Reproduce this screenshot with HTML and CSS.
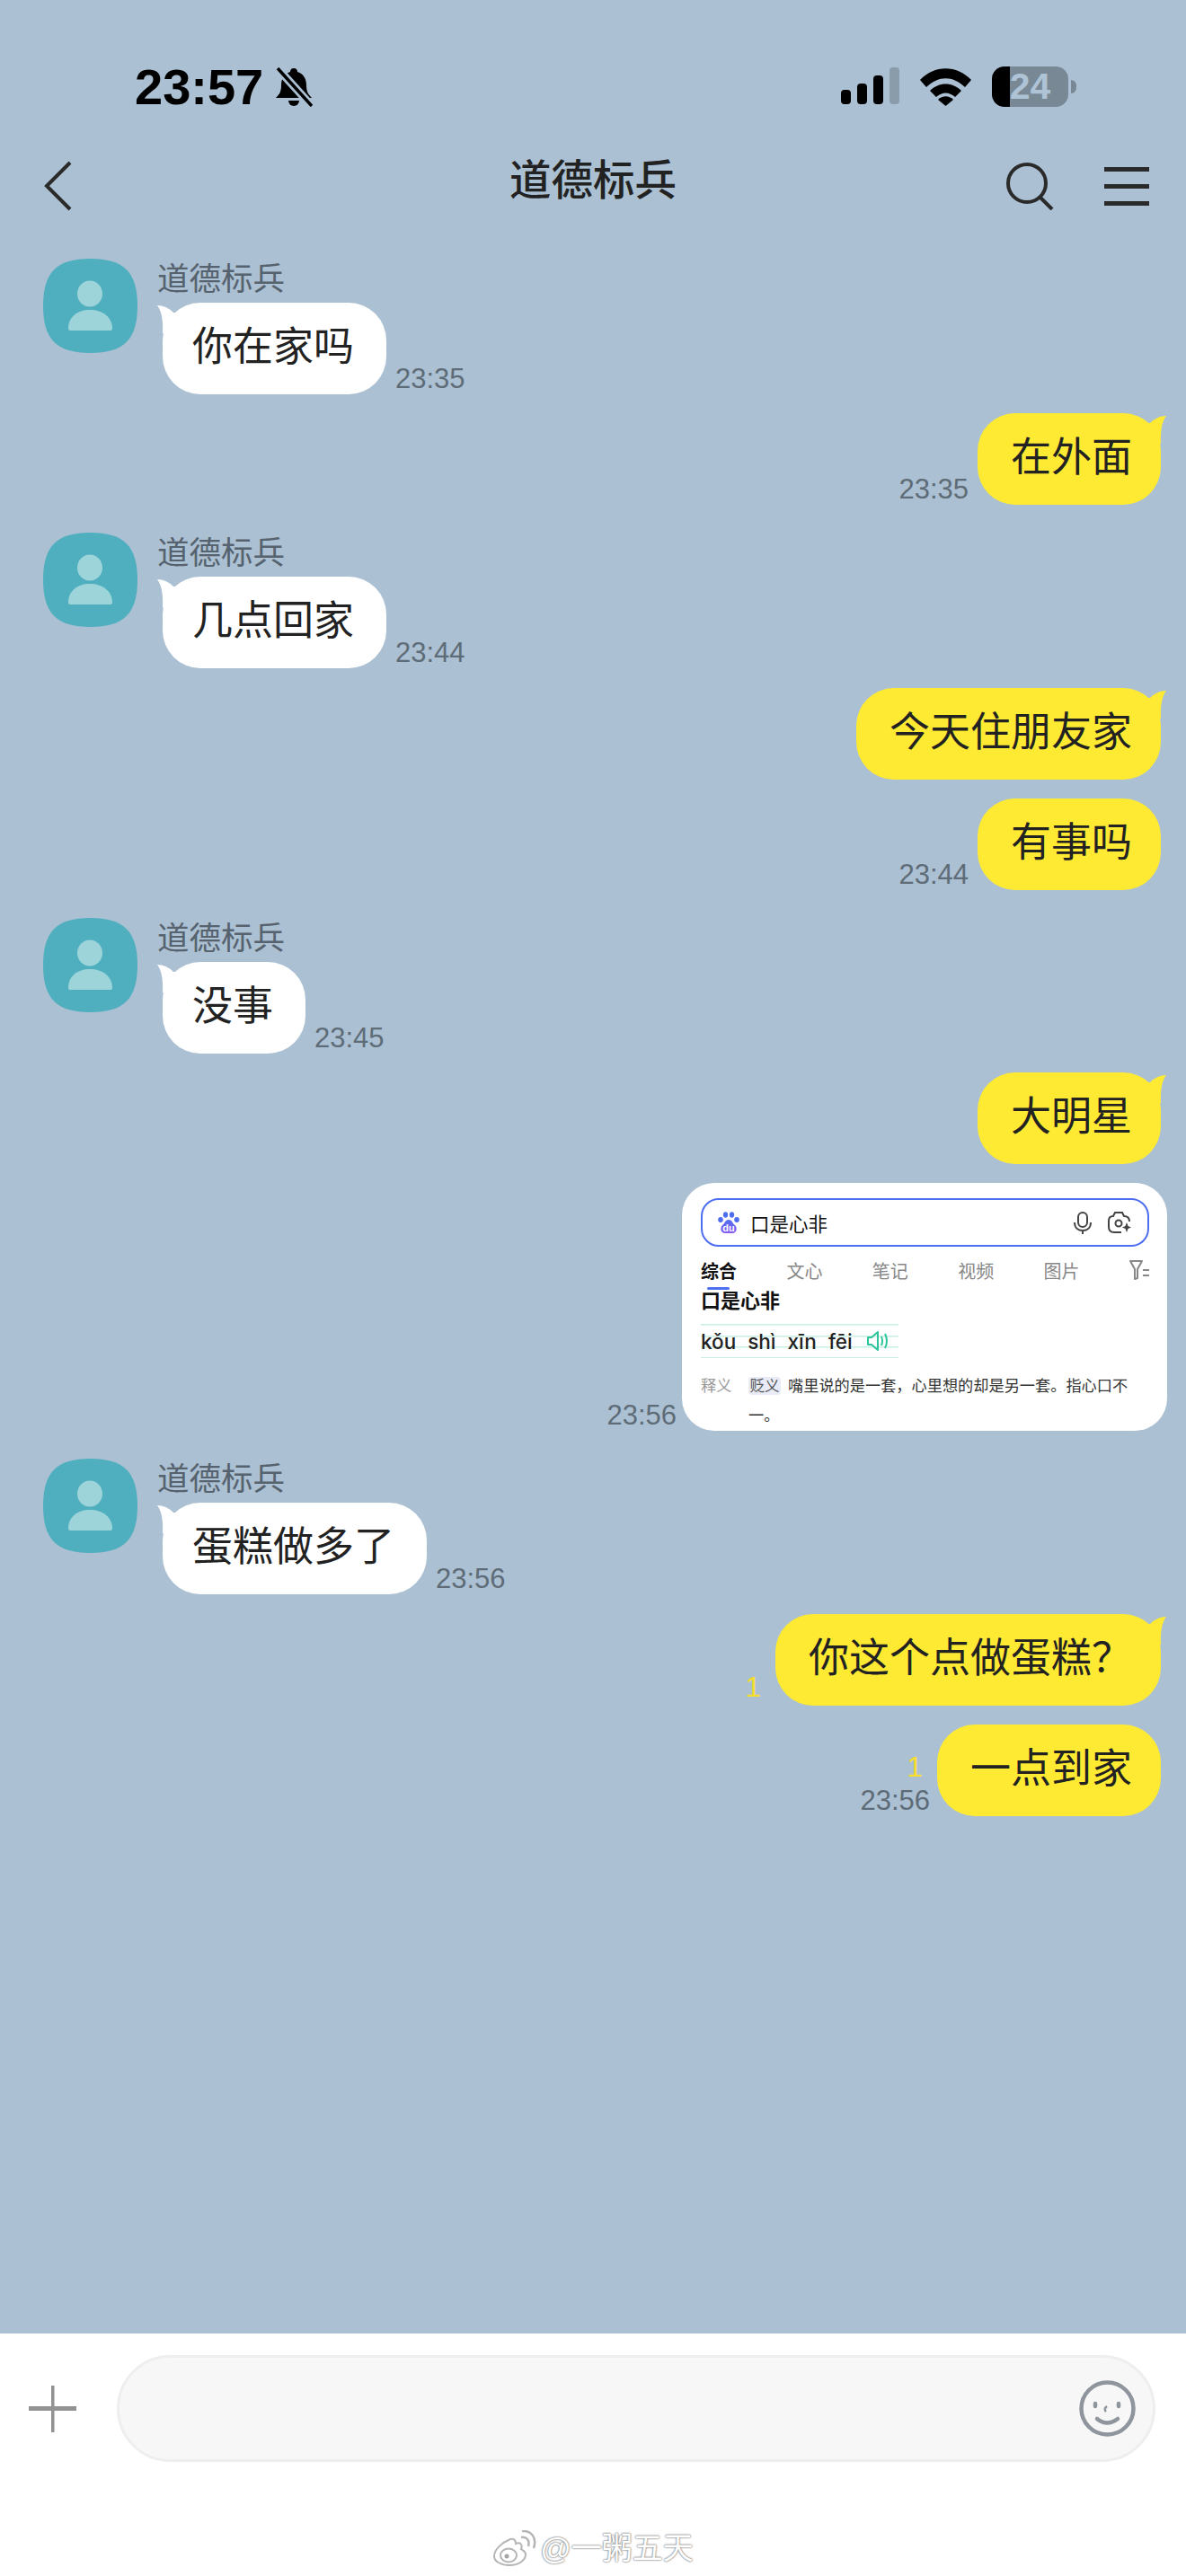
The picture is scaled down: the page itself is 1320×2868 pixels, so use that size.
FILE: index.html
```html
<!DOCTYPE html>
<html lang="zh">
<head>
<meta charset="utf-8">
<title>道德标兵</title>
<link rel="stylesheet" href="styles.css">
</head>
<body>
<div class="page">
  <div class="statusBar">
    <div class="statusLeft">
      <span class="clock">23:57</span>
      <svg class="bell" width="42" height="44" viewBox="0 0 42 44">
        <path d="M21 1C24 1 25 3 25 5C32 7 35 13 35 20C35 27 37 30 41 34H1C5 30 7 27 7 20C7 13 10 7 17 5C17 3 18 1 21 1Z"/>
        <path d="M15 37a6 6 0 0 0 12 0Z"/>
        <path d="M3 1L41 43" stroke="#abc0d2" stroke-width="9"/>
        <path d="M3 1L41 43" stroke="#000" stroke-width="3.5"/>
      </svg>
    </div>
    <div class="statusRight">
      <div class="signal">
        <span class="bar bar1"></span><span class="bar bar2"></span><span class="bar bar3"></span><span class="bar bar4"></span>
      </div>
      <svg class="wifi" width="57" height="42" viewBox="0 0 57 42">
        <path d="M0 13C16 -4 41 -4 57 13L50 21C36 8 21 8 7 21Z"/>
        <path d="M11 25C21 15 36 15 46 25L39 32C32 26 25 26 18 32Z"/>
        <path d="M20 35C25 30 32 30 37 35L28.5 42Z"/>
      </svg>
      <div class="battery"><span>24</span></div>
      <span class="batteryCap"></span>
    </div>
  </div>

  <div class="navBar">
    <svg class="back" width="32" height="58" viewBox="0 0 32 58">
      <path d="M30 3L4 29L30 55" fill="none" stroke="#2a2a2a" stroke-width="4"/>
    </svg>
    <div class="navTitle">道德标兵</div>
    <div class="navRight">
      <svg class="search" width="54" height="54" viewBox="0 0 54 54">
        <circle cx="24" cy="24" r="21" fill="none" stroke="#2a2a2a" stroke-width="4"/>
        <path d="M38 39L52 53" stroke="#2a2a2a" stroke-width="4"/>
      </svg>
      <div class="menu"><span></span><span></span><span></span></div>
    </div>
  </div>

  <div class="chat">
    <div class="recv">
      <svg class="avatar" width="105" height="105" viewBox="0 0 105 105">
        <path d="M52.5 0C90 0 105 15 105 52.5C105 90 90 105 52.5 105C15 105 0 90 0 52.5C0 15 15 0 52.5 0Z" fill="#4fafbf"/>
        <ellipse cx="52" cy="39" rx="14" ry="14.5" fill="#9dd4da"/>
        <path d="M28 78C28 65 38 57 52 57C66 57 77 65 77 78Q77 80 74 80H31Q28 80 28 78Z" fill="#9dd4da"/>
      </svg>
      <div class="recvBody">
        <div class="name">道德标兵</div>
        <div class="line">
          <div class="bubble white"><svg class="tail" width="30" height="34" viewBox="0 0 30 34"><path d="M2 3Q12 3 20 11L30 11V34H8Q9 12 2 3Z"/></svg>你在家吗</div>
          <span class="time">23:35</span>
        </div>
      </div>
    </div>

    <div class="sent">
      <span class="time">23:35</span>
      <div class="bubble yellow"><svg class="tail" width="30" height="34" viewBox="0 0 30 34"><path d="M2 3Q12 3 20 11L30 11V34H8Q9 12 2 3Z"/></svg>在外面</div>
    </div>

    <div class="recv">
      <svg class="avatar" width="105" height="105" viewBox="0 0 105 105">
        <path d="M52.5 0C90 0 105 15 105 52.5C105 90 90 105 52.5 105C15 105 0 90 0 52.5C0 15 15 0 52.5 0Z" fill="#4fafbf"/>
        <ellipse cx="52" cy="39" rx="14" ry="14.5" fill="#9dd4da"/>
        <path d="M28 78C28 65 38 57 52 57C66 57 77 65 77 78Q77 80 74 80H31Q28 80 28 78Z" fill="#9dd4da"/>
      </svg>
      <div class="recvBody">
        <div class="name">道德标兵</div>
        <div class="line">
          <div class="bubble white"><svg class="tail" width="30" height="34" viewBox="0 0 30 34"><path d="M2 3Q12 3 20 11L30 11V34H8Q9 12 2 3Z"/></svg>几点回家</div>
          <span class="time">23:44</span>
        </div>
      </div>
    </div>

    <div class="sent">
      <div class="bubble yellow"><svg class="tail" width="30" height="34" viewBox="0 0 30 34"><path d="M2 3Q12 3 20 11L30 11V34H8Q9 12 2 3Z"/></svg>今天住朋友家</div>
    </div>

    <div class="sent">
      <span class="time">23:44</span>
      <div class="bubble yellow">有事吗</div>
    </div>

    <div class="recv">
      <svg class="avatar" width="105" height="105" viewBox="0 0 105 105">
        <path d="M52.5 0C90 0 105 15 105 52.5C105 90 90 105 52.5 105C15 105 0 90 0 52.5C0 15 15 0 52.5 0Z" fill="#4fafbf"/>
        <ellipse cx="52" cy="39" rx="14" ry="14.5" fill="#9dd4da"/>
        <path d="M28 78C28 65 38 57 52 57C66 57 77 65 77 78Q77 80 74 80H31Q28 80 28 78Z" fill="#9dd4da"/>
      </svg>
      <div class="recvBody">
        <div class="name">道德标兵</div>
        <div class="line">
          <div class="bubble white"><svg class="tail" width="30" height="34" viewBox="0 0 30 34"><path d="M2 3Q12 3 20 11L30 11V34H8Q9 12 2 3Z"/></svg>没事</div>
          <span class="time">23:45</span>
        </div>
      </div>
    </div>

    <div class="sent">
      <div class="bubble yellow"><svg class="tail" width="30" height="34" viewBox="0 0 30 34"><path d="M2 3Q12 3 20 11L30 11V34H8Q9 12 2 3Z"/></svg>大明星</div>
    </div>

    <div class="sent sentCard">
      <span class="time">23:56</span>
      <div class="card">
        <div class="searchBox">
          <svg class="paw" width="24" height="25" viewBox="0 0 24 25">
            <defs><linearGradient id="pawBody" x1="0" y1="0" x2="0" y2="1"><stop offset="0" stop-color="#4e6ef2"/><stop offset="1" stop-color="#8a5df0"/></linearGradient></defs>
            <ellipse cx="3" cy="9" rx="2.8" ry="3" fill="#4e6ef2"/>
            <ellipse cx="8.5" cy="3.5" rx="2.6" ry="3.2" fill="#4e6ef2"/>
            <ellipse cx="15.5" cy="3.5" rx="2.6" ry="3.2" fill="#4e6ef2"/>
            <ellipse cx="21" cy="9" rx="2.8" ry="3" fill="#4e6ef2"/>
            <path d="M12 9C16 9 16 13 19 15C22 18 21 24 16 24H8C3 24 2 18 5 15C8 13 8 9 12 9Z" fill="url(#pawBody)"/>
            <text x="12" y="22" text-anchor="middle" class="pawText">du</text>
          </svg>
          <span class="searchText">口是心非</span>
          <svg class="mic" width="20" height="25" viewBox="0 0 20 25" fill="none" stroke="#444" stroke-width="2">
            <rect x="5" y="1" width="10" height="16" rx="5"/>
            <path d="M1 12C1 18 5 21 10 21C15 21 19 18 19 12M10 21V25"/>
          </svg>
          <svg class="cam" width="26" height="24" viewBox="0 0 26 24" fill="none" stroke="#444" stroke-width="2">
            <path d="M15 23H7C3 23 1 21 1 17V10C1 6 3 5 6 5L8 1H16L18 5C22 5 24 7 24 11"/>
            <circle cx="12" cy="13" r="3.5"/>
            <path d="M21 12L22.5 16L26 17.5L22.5 19L21 23L19.500 19L16 17.5L19.500 16Z" fill="#444" stroke="none"/>
          </svg>
        </div>
        <div class="tabs">
          <span class="tab tabOn">综合</span>
          <span class="tab">文心</span>
          <span class="tab">笔记</span>
          <span class="tab">视频</span>
          <span class="tab">图片</span>
          <svg class="filter" width="22" height="24" viewBox="0 0 22 24" fill="none" stroke="#888" stroke-width="2">
            <path d="M1 2H14L9 11V21L6 22V11Z" stroke-linejoin="round"/>
            <path d="M15 12H22M15 18H22"/>
          </svg>
        </div>
        <div class="cardHeading">口是心非</div>
        <div class="pinyin">
          <span>kǒu</span><span>shì</span><span>xīn</span><span>fēi</span>
          <svg class="speaker" width="24" height="22" viewBox="0 0 24 22" fill="none" stroke="#2cc49a" stroke-width="2">
            <path d="M1 7H5L12 1V21L5 15H1Z" stroke-linejoin="round"/>
            <path d="M16 6Q18 11 16 16M20 3Q24 11 20 19"/>
          </svg>
        </div>
        <div class="defRow">
          <span class="defLabel">释义</span>
          <div class="defText">
            <div class="defLine"><span class="defTag">贬义</span><span>嘴里说的是一套，心里想的却是另一套。指心口不</span></div>
            <div class="defLine">一。</div>
          </div>
        </div>
      </div>
    </div>

    <div class="recv">
      <svg class="avatar" width="105" height="105" viewBox="0 0 105 105">
        <path d="M52.5 0C90 0 105 15 105 52.5C105 90 90 105 52.5 105C15 105 0 90 0 52.5C0 15 15 0 52.5 0Z" fill="#4fafbf"/>
        <ellipse cx="52" cy="39" rx="14" ry="14.5" fill="#9dd4da"/>
        <path d="M28 78C28 65 38 57 52 57C66 57 77 65 77 78Q77 80 74 80H31Q28 80 28 78Z" fill="#9dd4da"/>
      </svg>
      <div class="recvBody">
        <div class="name">道德标兵</div>
        <div class="line">
          <div class="bubble white"><svg class="tail" width="30" height="34" viewBox="0 0 30 34"><path d="M2 3Q12 3 20 11L30 11V34H8Q9 12 2 3Z"/></svg>蛋糕做多了</div>
          <span class="time">23:56</span>
        </div>
      </div>
    </div>

    <div class="sent">
      <div class="meta"><span class="unread">1</span></div>
      <div class="bubble yellow"><svg class="tail" width="30" height="34" viewBox="0 0 30 34"><path d="M2 3Q12 3 20 11L30 11V34H8Q9 12 2 3Z"/></svg>你这个点做蛋糕？</div>
    </div>

    <div class="sent">
      <div class="meta"><span class="unread">1</span><span class="time">23:56</span></div>
      <div class="bubble yellow">一点到家</div>
    </div>
  </div>

  <div class="composer">
    <div class="inputRow">
      <div class="plus"></div>
      <div class="field">
        <svg class="smile" width="63" height="63" viewBox="0 0 63 63" fill="none" stroke="#8f959c" stroke-width="4.5">
          <circle cx="31.500" cy="31.500" r="29"/>
          <path d="M18 26V29M44 26V29" stroke-linecap="round"/>
          <path d="M31 29Q27 32 30 35" stroke-width="2.5"/>
          <path d="M20 43Q31 52 43 43" stroke-linecap="round"/>
        </svg>
      </div>
    </div>
    <div class="watermark">
      <svg class="weibo" width="50" height="40" viewBox="0 0 50 40">
        <path d="M20 10C10 14 2 22 2 29C2 35 10 39 19 39C30 39 37 33 37 27C37 23 33 22 32 21C34 16 31 13 26 15C26 11 24 9 20 10Z" fill="#fff" stroke="#b5b5b5" stroke-width="2"/>
        <ellipse cx="18" cy="28" rx="9" ry="7.500" fill="#fff" stroke="#b5b5b5" stroke-width="2"/>
        <circle cx="16" cy="29" r="2.500" fill="#a5a5a5"/>
        <path d="M32 8C38 7 42 11 40 18M33 1C43 0 50 8 46 20" fill="none" stroke="#b5b5b5" stroke-width="2.500"/>
      </svg>
      <span class="markText">@一粥五天</span>
    </div>
  </div>
</div>
</body>
</html>
```

FILE: styles.css
```css
* {
 box-sizing: border-box;
}
body {
 margin: 0;
 background-color: #abc0d2;
 font-family: "Liberation Sans", "Noto Sans CJK SC", sans-serif;
}
.page {
 width: 1320px;
 height: 2868px;
 display: flex;
 flex-direction: column;
 overflow: hidden;
}

/* status bar */
.statusBar {
 display: flex;
 justify-content: space-between;
 align-items: center;
 height: 45px;
 margin-top: 74px;
 padding: 0 122px 0 150px;
}
.statusLeft {
 display: flex;
 align-items: center;
 gap: 13px;
}
.clock {
 font-size: 56px;
 font-weight: bold;
 line-height: 45px;
 color: #000;
}
.bell {
 display: block;
}
.statusRight {
 display: flex;
 align-items: center;
}
.signal {
 display: flex;
 align-items: flex-end;
 gap: 7px;
 height: 41px;
 margin-top: -2px;
 margin-right: 23px;
}
.bar {
 width: 11px;
 border-radius: 4px;
 background-color: #000;
}
.bar1 { height: 16px; }
.bar2 { height: 23px; }
.bar3 { height: 32px; }
.bar4 { height: 41px; background-color: #8a9baa; }
.wifi {
 display: block;
 margin-right: 23px;
}
.battery {
 display: flex;
 justify-content: center;
 align-items: center;
 width: 85px;
 height: 45px;
 border-radius: 14px;
 background: linear-gradient(to right, #000 20px, #788894 20px);
 font-size: 41px;
 font-weight: bold;
 color: #afc3d6;
}
.batteryCap {
 width: 6px;
 height: 15px;
 margin-left: 3px;
 border-radius: 0 8px 8px 0;
 background-color: #788894;
}

/* nav */
.navBar {
 display: grid;
 grid-template-columns: 1fr auto 1fr;
 align-items: center;
 height: 58px;
 margin-top: 53px;
 padding: 0 41px 0 48px;
}
.back {
 display: block;
}
.navTitle {
 margin-right: 7px;
 padding-bottom: 12px;
 font-size: 46.5px;
 font-weight: 500;
 line-height: 58px;
 color: #222;
}
.navRight {
 display: flex;
 justify-content: flex-end;
 align-items: center;
 gap: 56px;
}
.search {
 display: block;
}
.menu {
 display: flex;
 flex-direction: column;
 gap: 14px;
 width: 50px;
}
.menu span {
 height: 5px;
 background-color: #2a2a2a;
}

/* messages */
.chat {
 flex: 1;
 display: flex;
 flex-direction: column;
 gap: 21.3px;
 padding: 58px 28px 0 48px;
}
.recv {
 display: flex;
 gap: 22px;
 margin-top: 9.7px;
}
.chat .recv:first-child {
 margin-top: 0;
}
.avatar {
 display: block;
 flex: none;
}
.name {
 height: 49px;
 font-size: 35.5px;
 line-height: 47px;
 color: #56636f;
}
.line {
 display: flex;
 align-items: flex-end;
 gap: 10px;
 margin-left: 6px;
}
.bubble {
 position: relative;
 height: 102px;
 border-radius: 42px;
 font-size: 45px;
 line-height: 100px;
 color: #222;
 white-space: nowrap;
}
.white {
 padding: 0 36px 0 33px;
 background-color: #fff;
}
.white .tail {
 fill: #fff;
}
.yellow {
 padding: 0 32px 0 37px;
 background-color: #ffea33;
}
.yellow .tail {
 fill: #ffea33;
 left: auto;
 right: -8px;
 transform: scaleX(-1);
}
.tail {
 position: absolute;
 left: -8px;
 top: 0;
}
.time {
 font-size: 31px;
 line-height: 30px;
 padding-bottom: 2px;
 color: #5e6c78;
 white-space: nowrap;
}
.sent {
 display: flex;
 justify-content: flex-end;
 align-items: flex-end;
 gap: 10px;
}
.meta {
 display: flex;
 flex-direction: column;
 align-items: flex-end;
}
.meta .time {
 margin-top: 2px;
 margin-right: -2px;
}
.unread {
 margin-right: 6px;
 margin-bottom: 6px;
 font-size: 32px;
 line-height: 30px;
 color: #f7de2e;
}

/* screenshot card */
.sentCard {
 gap: 6px;
 margin-right: -7px;
}
.card {
 width: 540px;
 height: 276px;
 padding: 17px 20px 0 21px;
 border-radius: 36px;
 background-color: #fff;
}
.searchBox {
 display: flex;
 align-items: center;
 height: 54px;
 padding: 0 18px 0 17px;
 border: 2.5px solid #4e6ef2;
 border-radius: 20px;
}
.paw {
 display: block;
 margin-right: 12px;
}
.pawText {
 font-size: 11px;
 font-weight: bold;
 fill: #fff;
}
.searchText {
 flex: 1;
 font-size: 21.5px;
 color: #111;
}
.mic {
 display: block;
 margin-right: 18px;
}
.cam {
 display: block;
}
.tabs {
 display: flex;
 justify-content: space-between;
 align-items: center;
 height: 30px;
 margin-top: 11px;
 font-size: 20px;
 color: #888;
}
.tab {
 position: relative;
}
.tabOn {
 font-weight: bold;
 color: #111;
}
.tabOn::after {
 content: "";
 position: absolute;
 left: 7px;
 right: 8px;
 bottom: -7px;
 height: 3px;
 border-radius: 2px;
 background-color: #4e6ef2;
}
.filter {
 display: block;
}
.cardHeading {
 height: 30px;
 margin-top: 5px;
 font-size: 22px;
 font-weight: bold;
 line-height: 30px;
 color: #111;
}
.pinyin {
 display: flex;
 align-items: center;
 gap: 13px;
 width: 220px;
 height: 38px;
 margin-top: 10px;
 background:
  linear-gradient(#c8efe4, #c8efe4) 0 0 / 100% 1.5px no-repeat,
  linear-gradient(#c8efe4, #c8efe4) 0 13px / 100% 1.5px no-repeat,
  linear-gradient(#c8efe4, #c8efe4) 0 25px / 100% 1.5px no-repeat,
  linear-gradient(#c8efe4, #c8efe4) 0 37px / 100% 1.5px no-repeat;
 font-family: Inter, "Liberation Sans", sans-serif;
 font-size: 22.5px;
 font-weight: 500;
 color: #222;
}
.speaker {
 display: block;
 margin-left: 3px;
}
.defRow {
 display: flex;
 margin-top: 15px;
 font-size: 17.2px;
 line-height: 33px;
}
.defLabel {
 flex: none;
 width: 53px;
 color: #999;
}
.defText {
 color: #333;
}
.defLine {
 height: 33px;
 white-space: nowrap;
}
.defTag {
 margin-right: 8px;
 padding: 1px 1.5px;
 border-radius: 4px;
 background-color: #e9ecf7;
 font-size: 16.500px;
 color: #555;
}

/* bottom input */
.composer {
 height: 270px;
 background-color: #fff;
}
.inputRow {
 display: flex;
 align-items: center;
 padding: 24px 34px 0 32px;
}
.plus {
 flex: none;
 width: 53px;
 height: 52px;
 margin-right: 45px;
 background:
  linear-gradient(#929292, #929292) center / 100% 5px no-repeat,
  linear-gradient(#929292, #929292) center / 3.5px 100% no-repeat;
}
.field {
 flex: 1;
 display: flex;
 justify-content: flex-end;
 align-items: center;
 height: 119px;
 padding-right: 19px;
 border: 3px solid #eeeeee;
 border-radius: 60px;
 background-color: #f7f7f7;
}
.smile {
 display: block;
}
.watermark {
 display: flex;
 justify-content: center;
 align-items: center;
 gap: 3px;
 margin-top: 76px;
}
.weibo {
 display: block;
}
.markText {
 font-size: 34px;
 line-height: 38px;
 color: #fff;
 text-shadow: 0 0 2px #777, 0 0 2px #777;
}
```
